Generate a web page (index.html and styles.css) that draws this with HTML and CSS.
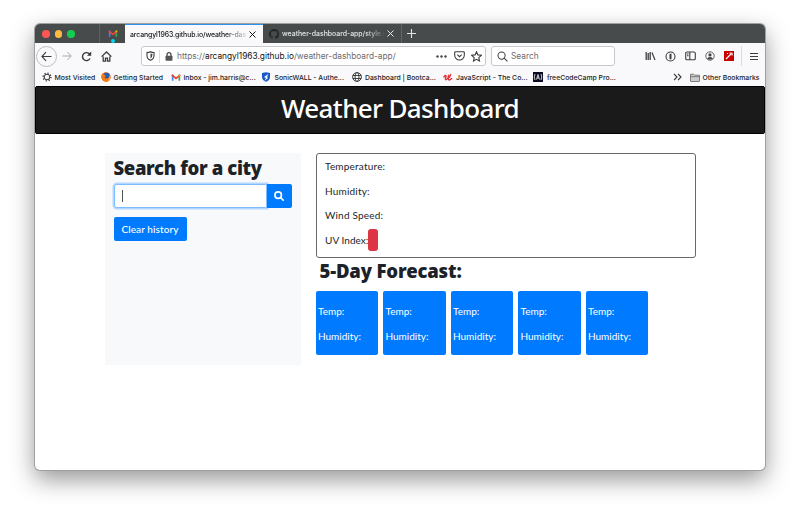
FILE: index.html
```html
<!DOCTYPE html>
<html lang="en">
<head>
<meta charset="utf-8">
<title>Weather Dashboard</title>
<link rel="stylesheet" href="styles.css">
</head>
<body>
<svg width="0" height="0" class="defs">
  <symbol id="gmail" viewBox="0 0 12 10"><path d="M1 9V1.500h2V9z" fill="#4285f4"/><path d="M9 9V1.500h2V9z" fill="#34a853"/><path d="M1 2l5 4 5-4" fill="none" stroke="#ea4335" stroke-width="2.100"/><path d="M9 4l2-1.500V1L9 2z" fill="#fbbc04"/></symbol>
</svg>
<main class="window">
  <div class="tabs">
    <div class="lights"><i class="red"></i><i class="yellow"></i><i class="green"></i></div>
    <div class="pinned"><svg width="10" height="9"><use href="#gmail"/></svg><i></i></div>
    <div class="tab active"><span class="fade t1">arcangyl1963.github.io/weather-das</span><svg class="close" width="7" height="7" viewBox="0 0 7 7"><path d="M.5.5l6 6M6.500.5l-6 6"/></svg></div>
    <div class="tab other"><svg class="octo" width="10" height="10" viewBox="0 0 16 16"><path fill="#22272a" d="M8 0C3.600 0 0 3.600 0 8c0 3.500 2.300 6.500 5.500 7.600.4.1.5-.2.5-.4v-1.500c-2 .5-2.700-.9-2.900-1.400-.1-.3-.5-1-.9-1.200.8-.4 1.400.5 1.700.9.6 1 1.500.7 2.100.5.1-.5.3-.8.6-1-1.800-.2-3.600-.9-3.600-4 0-.9.3-1.600.8-2.200-.1-.2-.4-1 .1-2.100 0 0 .7-.2 2.200.8a7.500 7.500 0 0 1 4 0c1.500-1 2.200-.8 2.200-.8.4 1.100.2 1.900.1 2.100.5.6.8 1.300.8 2.200 0 3.100-1.900 3.800-3.700 4 .3.3.6.8.6 1.500v2.200c0 .2.1.5.5.4A8 8 0 0 0 8 0z"/></svg><span class="fade t2">weather-dashboard-app/style.c</span><svg class="close" width="7" height="7" viewBox="0 0 7 7"><path d="M.5.5l6 6M6.500.5l-6 6"/></svg></div>
    <svg class="plus" width="9" height="9" viewBox="0 0 9 9"><path d="M4.500 0v9M0 4.500h9"/></svg>
  </div>
  <div class="nav">
    <div class="back"><svg width="11" height="11" viewBox="0 0 11 11"><path d="M10.500 5.500H1M5 1.200L.9 5.500 5 9.800"/></svg></div>
    <svg class="fwd" width="10" height="10" viewBox="0 0 11 11"><path d="M.5 5.500H10M6 1.200l4.100 4.300L6 9.800"/></svg>
    <svg class="reload" width="11" height="11" viewBox="0 0 11 11"><path d="M9 7.500A4 4 0 1 1 8.700 3.200"/><path d="M10.200.5v4.200H6z" fill="#333" stroke="none"/></svg>
    <svg class="home" width="11" height="11" viewBox="0 0 11 11"><path d="M.6 5.600L5.500 1l4.900 4.600M2.200 5.500v4.600h2.300V7.200h2v2.900h2.300V5.500"/></svg>
    <div class="url">
      <svg width="9" height="10" viewBox="0 0 9 10"><path d="M1 1.500Q3 1.500 4.500.7 6 1.500 8 1.500V4.500Q8 8 4.500 9.300 1 8 1 4.500z"/><path d="M4.500 2.500v5Q6.500 6.500 6.500 3z" fill="#444" stroke="none"/></svg>
      <i class="rule"></i>
      <svg width="8" height="9" viewBox="0 0 8 9"><path d="M2 4V2.700a2 2 0 0 1 4 0V4" stroke-width="1.200"/><rect x=".5" y="3.800" width="7" height="5" rx=".8" fill="#555" stroke="none"/></svg>
      <span class="address">https://<b>arcangyl1963.github.io</b>/weather-dashboard-app/</span>
      <svg class="dots" width="11" height="3" viewBox="0 0 11 3"><g fill="#444" stroke="none"><circle cx="1.500" cy="1.500" r="1.200"/><circle cx="5.500" cy="1.500" r="1.200"/><circle cx="9.500" cy="1.500" r="1.200"/></g></svg>
      <svg class="pocket" width="11" height="10" viewBox="0 0 11 10"><path d="M1.500.8h8q.8 0 .8.8v2.600a4.800 4.800 0 0 1-9.600 0V1.600q0-.8.8-.8zM3.300 3.700l2.200 2 2.200-2"/></svg>
      <svg class="star" width="11" height="11" viewBox="0 0 11 11"><path d="M5.500.8l1.400 3.100 3.400.4-2.500 2.300.7 3.400-3-1.700-3 1.700.7-3.400L.7 4.300l3.400-.4z"/></svg>
    </div>
    <div class="find"><svg width="11" height="11" viewBox="0 0 12 12"><circle cx="5" cy="5" r="3.900"/><path d="M7.800 7.800l3.600 3.600"/></svg><span>Search</span></div>
    <div class="tools">
      <svg width="11" height="10" viewBox="0 0 11 10"><path d="M1.200 1v8M3.200 2v7M5.200 1v8" stroke-width="1.300"/><path d="M7 1.500L10 9" stroke-width="1.200"/></svg>
      <svg width="11" height="11" viewBox="0 0 11 11"><circle cx="5.500" cy="5.500" r="4.500"/><path d="M5.500 2.800v5.400" stroke-width="2"/></svg>
      <svg width="11" height="10" viewBox="0 0 11 10"><rect x=".7" y="1" width="9.600" height="7.800" rx="1.300"/><path d="M4.800 1v8M2 3h1.500M2 4.700h1.500"/></svg>
      <svg width="10" height="10" viewBox="0 0 10 10"><circle cx="5" cy="5" r="4.200" stroke-width=".8"/><circle cx="5" cy="3.900" r="1.600" fill="#444" stroke="none"/><path d="M2.200 7.700Q2.500 6 5 6t2.800 1.700Q5 9.500 2.200 7.700z" fill="#444" stroke="none"/></svg>
      <svg width="10" height="10" viewBox="0 0 10 10"><path fill="#c80000" stroke="none" d="M0 0h10v10H0z"/><path d="M2 8l5-5M5.500 2l2.500.2.1 2.300M3 2.500h1" stroke="#fff"/></svg>
      <i class="rule"></i>
      <svg width="8" height="9" viewBox="0 0 8 9"><path d="M0 1.500h8M0 4.500h8M0 7.500h8" stroke-width="1.100"/></svg>
    </div>
  </div>
  <div class="bookmarks">
    <div class="bm w1"><svg width="10" height="10" viewBox="0 0 10 10"><circle cx="5" cy="5" r="2.800" fill="none" stroke="#333" stroke-width="1"/><circle cx="5" cy="5" r="3.900" fill="none" stroke="#333" stroke-width="1.400" stroke-dasharray="1.200 1.863"/></svg><span>Most Visited</span></div>
    <div class="bm w2"><svg width="10" height="10" viewBox="0 0 10 10"><circle cx="5" cy="5" r="4.700" fill="#e8590c"/><circle cx="5.600" cy="3.900" r="3.200" fill="#245db5"/><path d="M.4 4Q.5 2 1.800 1q0 1.300 1.200 1.500L5 4 3.400 5q.8 2 3 1.500 2-.6 2.200-3 1 1 .9 2.500Q8.700 9.700 5 9.700.4 9 .4 4z" fill="#f77b13"/><path d="M8.800 3q1.500 4-1.800 5.800Q9 6 8.800 3z" fill="#ffd43b"/></svg><span>Getting Started</span></div>
    <div class="bm w3"><svg width="10" height="9"><use href="#gmail"/></svg><span>Inbox - jim.harris@c...</span></div>
    <div class="bm w4"><svg width="10" height="10" viewBox="0 0 10 10"><path d="M1 1l4-.7L9 1v4Q9 8.300 5 9.800 1 8.300 1 5z" fill="#1858c9"/><path d="M3 5L7.500 2 6 5l1 1-3.500 3L5 6z" fill="#fff"/></svg><span>SonicWALL - Authe...</span></div>
    <div class="bm w5"><svg width="10" height="10" viewBox="0 0 10 10"><g fill="none" stroke="#333" stroke-width=".9"><circle cx="5" cy="5" r="4.400"/><ellipse cx="5" cy="5" rx="2" ry="4.400"/><path d="M.8 3.500h8.400M.8 6.500h8.400"/></g></svg><span>Dashboard | Bootca...</span></div>
    <div class="bm w6"><svg width="10" height="10" viewBox="0 0 10 10"><path d="M.9 5Q2.500 3 3 3.500T2.300 6.800Q3 9 4.800 6L5.800 3.200M5.200 6Q5.500 9 7.300 7.500L8.700 6.500M6.400 5.500L7.800 2.500" fill="none" stroke="#e52b34" stroke-width="1.300" stroke-linecap="round"/></svg><span>JavaScript - The Co...</span></div>
    <div class="bm w7"><svg width="10" height="10" viewBox="0 0 10 10"><path d="M0 0h10v10H0z" fill="#0a0a23"/><path d="M2 2Q.5 5 2 8M8 2q1.500 3 0 6M3.500 7.500L5 2.500l1.500 5M4 6h2" fill="none" stroke="#fff" stroke-width=".8"/></svg><span>freeCodeCamp Pro...</span></div>
    <svg class="more" width="9" height="8" viewBox="0 0 9 8"><path d="M1 .8L4 4 1 7.200M5 .8L8 4 5 7.200" fill="none" stroke="#333" stroke-width="1.100"/></svg>
    <div class="bm w8"><svg width="10" height="9" viewBox="0 0 10 9"><path d="M.5 8V1.200h3.200l1 1h4.800V8q0 .5-.5.5H1Q.5 8.500.5 8zM.5 3.700h9" fill="#ccc" stroke="#666" stroke-width=".8"/></svg><span>Other Bookmarks</span></div>
  </div>
  <header><h1>Weather Dashboard</h1></header>
  <div class="content">
    <aside>
      <h2>Search for a city</h2>
      <div class="search"><div class="field"><i></i></div><button aria-label="Search"><svg width="10" height="10" viewBox="0 0 12 12"><circle cx="5" cy="5" r="3.900"/><path d="M7.800 7.800l3.200 3.200"/></svg></button></div>
      <button class="clear">Clear history</button>
    </aside>
    <section>
      <div class="current"><p><span>Temperature:</span></p><p><span>Humidity:</span></p><p><span>Wind Speed:</span></p><p class="uv"><span>UV Index:</span><i></i></p></div>
      <h2>5-Day Forecast:</h2>
      <div class="days">
        <div><p>Temp:</p><p>Humidity:</p></div><div><p>Temp:</p><p>Humidity:</p></div><div><p>Temp:</p><p>Humidity:</p></div><div><p>Temp:</p><p>Humidity:</p></div><div><p>Temp:</p><p>Humidity:</p></div>
      </div>
    </section>
  </div>
</main>
</body>
</html>
```
FILE: styles.css
```css
* { box-sizing: border-box; }
body { margin: 0; height: 516px; overflow: hidden; background: #fff; font-family: Inter, "Liberation Sans", sans-serif; }
svg { display: block; flex: none; }
i { display: block; flex: none; }
p, h1, h2 { margin: 0; white-space: nowrap; }
span { white-space: nowrap; }
button { border: 0; padding: 0; color: #fff; background: #007bff; }
.defs { position: absolute; }

.window { width: 730px; height: 446px; margin: 24px 0 0 35px; background: #fff; border-radius: 5px; overflow: hidden; box-shadow: 0 0 0 1px #a0a0a0, 0 9px 24px rgba(0,0,0,.43); }

.tabs { display: flex; height: 19px; background: #474b4c; align-items: stretch; }
.lights { display: flex; width: 64px; align-items: center; gap: 5px; padding: 1px 0 0 7px; }
.lights i { width: 7.500px; height: 7.500px; border-radius: 50%; }
.red { background: #fc5753; }
.yellow { background: #fdbc40; }
.green { background: #14cd50; }
.pinned { width: 26px; border-left: 1px solid #5d6162; display: flex; flex-direction: column; align-items: center; padding-top: 5px; }
.pinned i { width: 4px; height: 4px; border-radius: 50%; background: #00d9ed; margin-top: 1px; }
.tab { display: flex; align-items: center; font-size: 6.900px; }
.active { width: 138px; background: #f9f9fb; border-top: 1px solid #2b91ef; padding-left: 5px; color: #17171a; font-weight: 500; }
.other { width: 139px; border-right: 1px solid #606465; padding-left: 6px; color: #e6e7e7; font-weight: 500; }
.octo { margin-right: 3px; }
.fade { -webkit-mask-image: linear-gradient(90deg, #000 82%, rgba(0,0,0,.15)); mask-image: linear-gradient(90deg, #000 82%, rgba(0,0,0,.15)); }
.t1 { width: 116px; margin-right: 3px; letter-spacing: -.1px; }
.t2 { width: 102px; margin-right: 3px; }
.close path { stroke: currentColor; stroke-width: 1; }
.plus { margin: 5px 0 0 5px; stroke: #e5e5e5; stroke-width: 1.100; }

.nav { display: flex; height: 26px; align-items: center; background: #f9f9fb; }
.nav svg { fill: none; stroke: #3c3c40; stroke-width: 1.100; }
.back { width: 21px; height: 21px; border: 1px solid #bdbdbf; border-radius: 50%; margin-left: 1px; display: grid; place-items: center; }
.nav .fwd { margin-left: 5px; stroke: #aaa; }
.nav .reload { margin-left: 9px; stroke-width: 1.400; }
.nav .home { margin-left: 9px; stroke-width: 1.300; }
.url { display: flex; align-items: center; width: 345px; height: 20px; margin-left: 29px; border: 1px solid #c8c8ca; border-radius: 3px; background: #fff; padding-left: 4px; }
.rule { width: 1px; height: 13px; background: #ddd; }
.url .rule { margin: 0 5px 0 4px; }
.address { width: 259px; margin-left: 4px; font-size: 8.300px; color: #6b6b70; }
.address b { font-weight: 400; color: #111; }
.pocket { margin-left: 7px; }
.star { margin-left: 6px; }
.find { display: flex; align-items: center; width: 124px; height: 20px; margin-left: 5px; border: 1px solid #c8c8ca; border-radius: 3px; background: #fff; padding-left: 5px; gap: 3px; font-size: 8.300px; color: #6b6b70; }
.tools { display: flex; align-items: center; margin-left: 29.500px; gap: 9px; }
.tools .rule { height: 20px; margin: 0 -1px 0 -2px; }

.bookmarks { display: flex; height: 17px; align-items: center; background: #f9f9fb; padding: 0 0 1px 7px; font-size: 6.850px; color: #1b1b1f; font-weight: 500; }
.bm { display: flex; align-items: center; gap: 2.500px; }
.w1 { width: 59px; }
.w2 { width: 70px; }
.w3 { width: 90px; }
.w4 { width: 91px; gap: 3.500px; }
.w5 { width: 91px; gap: 3px; }
.w6 { width: 90px; gap: 3px; }
.w7 { width: 140px; gap: 4px; }
.more { margin-right: 8px; }

header { height: 48px; background: #1b1a1b; border: 1px solid #000; border-radius: 2px; margin-bottom: 19px; }
h1 { font: 500 26px/42px "Noto Sans", sans-serif; color: #fff; text-align: center; letter-spacing: -.65px; }
.content { display: flex; gap: 15px; padding-left: 69.500px; color: #212529; }
aside { width: 196px; height: 212px; background: #f8f9fa; padding: 0 9px; }
h2 { font: 900 18.500px/30px "Noto Sans", sans-serif; color: #1c2227; letter-spacing: -.35px; }
.search { display: flex; height: 24px; margin-top: 1px; }
.field { width: 154px; border: 1px solid #80bdff; border-radius: 3px 0 0 3px; background: #fff; box-shadow: 0 0 0 1.500px #b3d7ff; padding: 5px 7px; }
.field i { width: 1px; height: 12px; background: #555; }
.search button { width: 25px; border-radius: 0 2px 2px 0; display: grid; place-items: center; }
.search button svg { fill: none; stroke: #fff; stroke-width: 2; stroke-linecap: round; }
.clear { display: block; width: 73px; height: 24px; margin-top: 9px; border-radius: 2px; font: 500 10px/24px Lato, sans-serif; letter-spacing: .1px; }

section { width: 380px; }
.current { height: 105px; border: 1px solid #67696b; border-radius: 3px; padding: 0 0 0 8.500px; }
.current p { height: 24.500px; font: 10px/24.500px Lato, sans-serif; letter-spacing: .2px; display: flex; align-items: center; }
.current .uv { letter-spacing: .05px; }
.uv i { width: 10px; height: 22px; border-radius: 3px; background: #dc3545; }
section h2 { height: 33px; line-height: 25px; padding-left: 4px; letter-spacing: -.15px; }
.days { display: flex; gap: 5px; }
.days div { width: 62.500px; height: 64px; background: #007bff; border-radius: 2px; padding: 8px 0 0 2.500px; color: #fff; }
.days p { font: 10px/24.500px Lato, sans-serif; }
```
